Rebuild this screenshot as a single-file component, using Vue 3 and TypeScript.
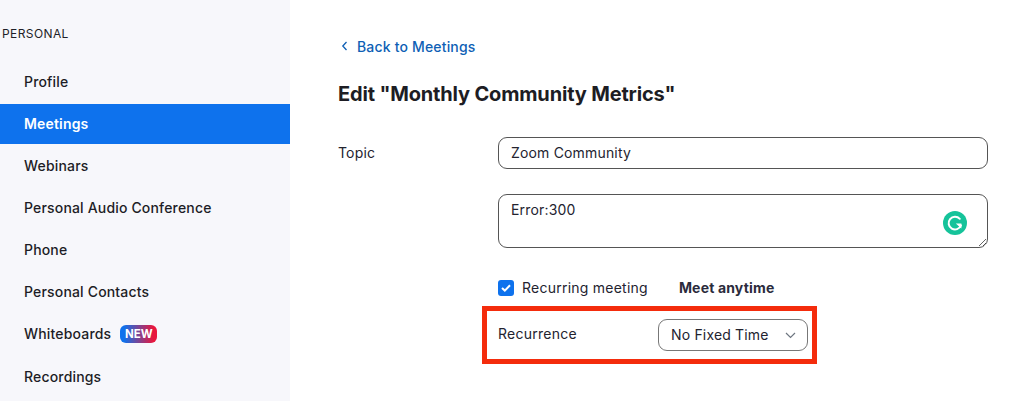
<template>
  <div class="page">
    <aside class="sidebar">
      <div class="section-title">PERSONAL</div>
      <nav class="nav">
        <a
          v-for="item in navItems"
          :key="item"
          class="nav-item"
          :class="{ active: item === 'Meetings' }"
        >
          <span>{{ item }}</span>
          <span v-if="item === 'Whiteboards'" class="badge">NEW</span>
        </a>
      </nav>
    </aside>

    <main class="content">
      <a class="back">
        <svg width="8" height="10" viewBox="0 0 8 10" fill="none">
          <path d="M5.5 1 L1.8 5 L5.5 9" stroke="#0e5fb5" stroke-width="1.3" />
        </svg>
        <span>Back to Meetings</span>
      </a>
      <h1 class="heading">Edit "Monthly Community Metrics"</h1>

      <div class="form-row topic-row">
        <label class="label">Topic</label>
        <input class="text-input" value="Zoom Community" />
      </div>

      <div class="form-row desc-row">
        <div class="label"></div>
        <div class="desc-wrap">
          <textarea class="desc">Error:300</textarea>
          <svg class="grammarly" width="24" height="24" viewBox="0 0 24 24" fill="none">
            <circle cx="12" cy="12" r="12" fill="#15c39a" />
            <path
              d="M16.8 7.8 A6.4 6.4 0 1 0 18 14.4"
              stroke="#fff"
              stroke-width="2"
              stroke-linecap="round"
            />
            <path d="M12.8 12.4 H18.4 V17.6 Z" fill="#fff" />
          </svg>
        </div>
      </div>

      <div class="form-row recurring-row">
        <div class="label"></div>
        <span class="checkbox">
          <svg width="10" height="8" viewBox="0 0 10 8" fill="none">
            <path d="M1 4 L3.8 6.6 L9 1.2" stroke="#fff" stroke-width="2" />
          </svg>
        </span>
        <span class="check-text">Recurring meeting</span>
        <span class="anytime">Meet anytime</span>
      </div>

      <div class="form-row highlight-row">
        <div class="label"></div>
        <div class="highlight">
          <span class="recurrence-label">Recurrence</span>
          <div class="select">
            <span class="select-text">No Fixed Time</span>
            <svg class="chevron" width="11" height="7" viewBox="0 0 11 7" fill="none">
              <path d="M1 1 L5.5 5.5 L10 1" stroke="#6e7680" stroke-width="1.2" />
            </svg>
          </div>
        </div>
      </div>
    </main>
  </div>
</template>

<script setup lang="ts">
const navItems: string[] = [
  'Profile',
  'Meetings',
  'Webinars',
  'Personal Audio Conference',
  'Phone',
  'Personal Contacts',
  'Whiteboards',
  'Recordings'
];
</script>

<style>
html,
body {
  margin: 0;
  overflow: hidden;
  background: #fff;
}
</style>

<style scoped>
.page {
  display: flex;
  height: 401px;
  overflow: hidden;
  font-family: Inter, "Liberation Sans", sans-serif;
  color: #23232f;
  font-size: 14px;
  letter-spacing: 0.17px;
}

.sidebar {
  width: 290px;
  flex-shrink: 0;
  background: #f7f7fb;
}

.section-title {
  padding: 26px 0 0 2px;
  font-size: 12px;
  line-height: 15px;
  letter-spacing: 0.4px;
  color: #1f1f28;
}

.nav {
  display: flex;
  flex-direction: column;
  margin-top: 20px;
}

.nav-item {
  box-sizing: border-box;
  display: flex;
  align-items: center;
  height: 42px;
  padding: 0 0 2px 24px;
  font-weight: 500;
  color: #1d1d26;
}

.nav-item:last-child {
  padding-bottom: 0;
}

.nav-item.active {
  height: 40px;
  margin: 1px 0;
  background: #0e72ed;
  color: #fff;
  font-weight: 600;
}

.badge {
  margin: 2px 0 0 9px;
  width: 37px;
  height: 18px;
  border-radius: 6px;
  background: linear-gradient(90deg, #0e72ed 10%, #e8173d 90%);
  color: #fff;
  font-size: 11.5px;
  font-weight: 700;
  line-height: 18px;
  letter-spacing: 0;
  text-align: center;
}

.content {
  flex: 1;
  padding: 37px 0 0 48px;
}

.back {
  display: flex;
  align-items: center;
  gap: 8px;
  height: 18px;
  padding-left: 3px;
  color: #0e5fb5;
  font-weight: 500;
  font-size: 14px;
}

.heading {
  margin: 27px 0 0;
  font-size: 20px;
  line-height: 24px;
  font-weight: 700;
  letter-spacing: -0.17px;
  color: #1d1d24;
}

.form-row {
  display: flex;
  align-items: center;
}

.label {
  width: 160px;
  flex-shrink: 0;
  padding-bottom: 2px;
  color: #23232f;
}

.topic-row {
  margin-top: 31px;
}

.text-input {
  box-sizing: border-box;
  width: 490px;
  height: 32px;
  padding: 0 12px 2px;
  border: 1px solid #555;
  border-radius: 9px;
  outline: none;
  font: inherit;
  letter-spacing: inherit;
  color: #23232f;
}

.desc-row {
  margin-top: 25px;
}

.desc-wrap {
  position: relative;
  display: flex;
}

.desc {
  box-sizing: border-box;
  width: 490px;
  height: 54px;
  padding: 6px 12px;
  border: 1px solid #555;
  border-radius: 9px;
  outline: none;
  font: inherit;
  letter-spacing: inherit;
  line-height: 17px;
  color: #23232f;
}

.grammarly {
  position: absolute;
  right: 21px;
  top: 17px;
}

.recurring-row {
  margin-top: 32px;
  height: 16px;
}

.checkbox {
  display: flex;
  align-items: center;
  justify-content: center;
  width: 16px;
  height: 16px;
  border-radius: 3px;
  background: #0e72ed;
}

.check-text {
  margin: 0 0 2px 8px;
  letter-spacing: 0.24px;
  color: #23232f;
}

.anytime {
  margin: 0 0 2px 31px;
  font-weight: 700;
  color: #2b2b3c;
}

.highlight-row {
  margin-top: 10px;
}

.highlight {
  box-sizing: border-box;
  display: flex;
  align-items: center;
  width: 335px;
  height: 58px;
  margin-left: -16px;
  padding-left: 11px;
  border: 5px solid #f42c0c;
}

.recurrence-label {
  width: 160px;
  padding-bottom: 3px;
  letter-spacing: 0.26px;
}

.select {
  box-sizing: border-box;
  display: flex;
  align-items: center;
  justify-content: space-between;
  width: 150px;
  height: 32px;
  padding: 0 12px;
  border: 1px solid #777;
  border-radius: 9px;
}

.select-text {
  padding-bottom: 2px;
}

.chevron {
  margin-right: -1px;
}
</style>
